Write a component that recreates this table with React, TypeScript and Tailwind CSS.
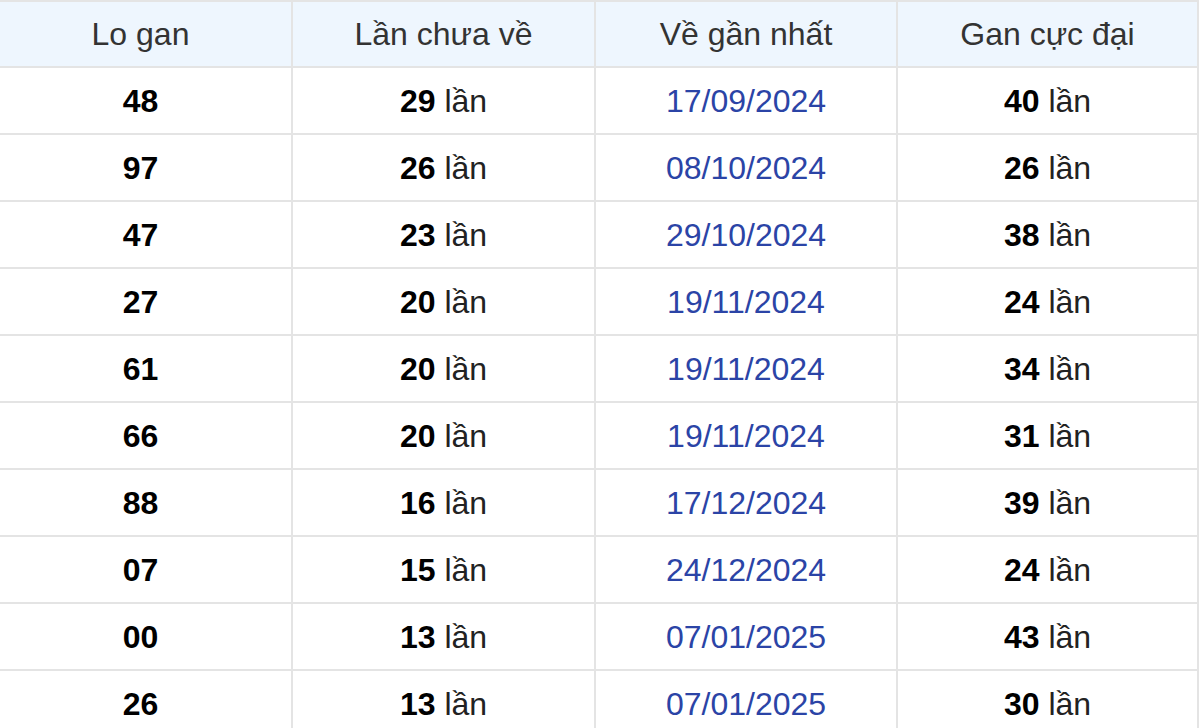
const rows = [
  { lo: '48', chua: 29, date: '17/09/2024', max: 40 },
  { lo: '97', chua: 26, date: '08/10/2024', max: 26 },
  { lo: '47', chua: 23, date: '29/10/2024', max: 38 },
  { lo: '27', chua: 20, date: '19/11/2024', max: 24 },
  { lo: '61', chua: 20, date: '19/11/2024', max: 34 },
  { lo: '66', chua: 20, date: '19/11/2024', max: 31 },
  { lo: '88', chua: 16, date: '17/12/2024', max: 39 },
  { lo: '07', chua: 15, date: '24/12/2024', max: 24 },
  { lo: '00', chua: 13, date: '07/01/2025', max: 43 },
  { lo: '26', chua: 13, date: '07/01/2025', max: 30 },
];

const cell = 'border-2 border-[#e4e4e4] text-center align-middle p-0';

export default function App() {
  return (
    <div className="w-[1200px] h-[728px] overflow-hidden bg-white font-['Liberation_Sans',Arial,sans-serif]">
      <table className="border-collapse table-fixed -ml-[12px] w-[1209px] text-[32px]">
        <colgroup>
          <col className="w-[303px]" />
          <col className="w-[303px]" />
          <col className="w-[302px]" />
          <col className="w-[301px]" />
        </colgroup>
        <thead>
          <tr className="h-[66px] bg-[#eef6fe] text-[#333333]">
            <th className={`${cell} font-normal`}>Lo gan</th>
            <th className={`${cell} font-normal`}>Lần chưa về</th>
            <th className={`${cell} font-normal`}>Về gần nhất</th>
            <th className={`${cell} font-normal`}>Gan cực đại</th>
          </tr>
        </thead>
        <tbody>
          {rows.map((r, i) => (
            <tr key={i} className="h-[67px] text-[#222222]">
              <td className={`${cell} font-bold text-black`}>{r.lo}</td>
              <td className={cell}>
                <span className="font-bold text-black">{r.chua}</span> lần
              </td>
              <td className={`${cell} text-[#2b44a6]`}>{r.date}</td>
              <td className={cell}>
                <span className="font-bold text-black">{r.max}</span> lần
              </td>
            </tr>
          ))}
        </tbody>
      </table>
    </div>
  );
}
